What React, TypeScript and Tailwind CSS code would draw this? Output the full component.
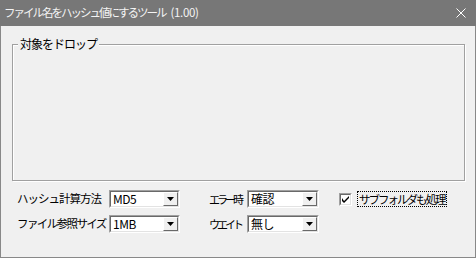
import React from 'react';

const FONT = '"MS UI Gothic", "Noto Sans CJK JP", sans-serif';

function Combo({ value, width }: { value: string; width: string }) {
  return (
    <div
      className={`${width} shrink-0 h-[18px] flex bg-white border-t border-l border-t-[#a0a0a0] border-l-[#a0a0a0] border-b border-r border-b-white border-r-white`}
    >
      <div className="flex-1 flex border-t border-l border-t-[#696969] border-l-[#696969] border-b border-r border-b-[#e3e3e3] border-r-[#e3e3e3]">
        <div className="flex-1 pl-[2px] text-[12px] leading-[14px] text-black tracking-[-0.5px] whitespace-nowrap">{value}</div>
        <div className="w-[15px] h-full flex items-center justify-center bg-[#f0f0f0] border-t border-l border-t-white border-l-white border-b border-r border-b-[#696969] border-r-[#696969]">
          <svg width="7" height="4" viewBox="0 0 7 4">
            <path d="M0 0 H7 L3.5 4 Z" fill="#000" />
          </svg>
        </div>
      </div>
    </div>
  );
}

export default function App() {
  return (
    <div
      className="w-[476px] h-[258px] bg-[#f0f0f0] border border-t-0 border-[#888] flex flex-col text-black"
      style={{ fontFamily: FONT }}
    >
      {/* Title bar */}
      <div className="h-[26px] -mx-px bg-[#777777] flex items-center pl-[4px] pr-[10px]">
        <div className="flex items-center text-[11.5px] text-[#f4f4f4] whitespace-nowrap" style={{ fontFamily: '"Noto Sans CJK JP", sans-serif' }}>
          <span className="tracking-[-2px]">ファイル名をハッシュ値にするツール</span>
          <span className="ml-[5px] tracking-[-0.3px]">(1.00)</span>
        </div>
        <svg className="ml-auto" width="10" height="10" viewBox="0 0 10 10">
          <path d="M0.5 0.5 L9.5 9.5 M9.5 0.5 L0.5 9.5" stroke="#fff" strokeWidth="1" />
        </svg>
      </div>

      {/* Body */}
      <div className="flex-1 flex flex-col pl-[11px] pr-[10px] pt-[18px]">
        {/* Group box */}
        <div className="relative h-[137px] border border-[#a0a0a0] shadow-[1px_1px_0_#fff,inset_1px_1px_0_#fff]">
          <div className="absolute -top-[8px] left-[5px] px-[2px] bg-[#f0f0f0] text-[12px] leading-[14px] tracking-[-1px] whitespace-nowrap">
            対象をドロップ
          </div>
        </div>

        {/* Options */}
        <div className="mt-[9px] pl-[5px] flex flex-col gap-[7px] text-[11.5px] whitespace-nowrap">
          <div className="flex items-center">
            <div className="w-[92px] shrink-0 tracking-[-1px]">ハッシュ計算方法</div>
            <Combo value="MD5" width="w-[71px]" />
            <div className="w-[29px] shrink-0" />
            <div className="w-[38px] shrink-0 text-[11px] tracking-[-3px]">エラー時</div>
            <Combo value="確認" width="w-[72px]" />
            <div className="w-[20px] shrink-0" />
            <div className="flex items-center gap-[5px]">
              <div className="w-[13px] h-[13px] shrink-0 bg-white border-t border-l border-t-[#a0a0a0] border-l-[#a0a0a0] border-b border-r border-b-white border-r-white">
                <div className="w-full h-full border-t border-l border-t-[#696969] border-l-[#696969] border-b border-r border-b-[#e3e3e3] border-r-[#e3e3e3] flex items-center justify-center">
                  <svg width="7" height="7" viewBox="0 0 7 7">
                    <path d="M0 2 L0 5 L2 7 L7 2 L7 0 L2 5 Z" fill="#000" />
                  </svg>
                </div>
              </div>
              <div className="border border-dotted border-black px-[1px] py-[1px] leading-[12px] tracking-[-2px]">
                サブフォルダも処理
              </div>
            </div>
          </div>
          <div className="flex items-center">
            <div className="w-[92px] shrink-0 tracking-[-1.6px]">ファイル参照サイズ</div>
            <Combo value="1MB" width="w-[71px]" />
            <div className="w-[29px] shrink-0" />
            <div className="w-[38px] shrink-0 text-[11px] tracking-[-3px]">ウエイト</div>
            <Combo value="無し" width="w-[72px]" />
          </div>
        </div>
      </div>
    </div>
  );
}
